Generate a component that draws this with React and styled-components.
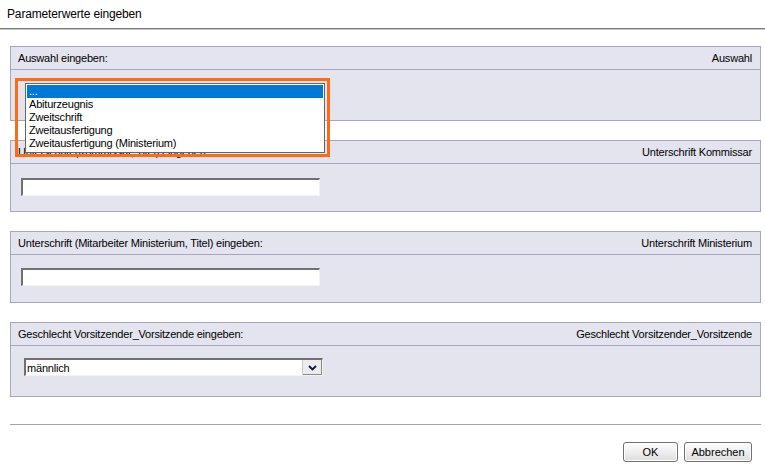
import React from 'react';
import styled, { createGlobalStyle } from 'styled-components';

const GlobalStyle = createGlobalStyle`
  html, body {
    margin: 0;
    padding: 0;
    background: #ffffff;
  }
  body {
    font-family: "Liberation Sans", Arial, sans-serif;
    font-size: 11px;
    letter-spacing: -0.2px;
    color: #000;
  }
`;

const Dialog = styled.div`
  width: 765px;
  height: 466px;
  display: flex;
  flex-direction: column;
  background: #ffffff;
`;

const TitleBar = styled.div`
  height: 28px;
  display: flex;
  align-items: center;
  padding-left: 7px;
  font-size: 12px;
  letter-spacing: -0.15px;
  border-bottom: 1px solid #7c7c7c;
  box-shadow: 0 1px 0 #c4c4c4;
`;

const Content = styled.div`
  display: flex;
  flex-direction: column;
  gap: 19px;
  padding: 17px 4px 0 10px;
`;

const Panel = styled.div`
  border: 1px solid #a7a6bd;
  background: #e4e4ee;
`;

const PanelHeader = styled.div`
  height: 22px;
  display: flex;
  align-items: center;
  justify-content: space-between;
  padding: 0 8px 0 7px;
  border-bottom: 1px solid #a7a6bd;
`;

const PanelBody = styled.div`
  position: relative;
  height: ${(p) => p.$height}px;
  display: flex;
  align-items: flex-start;
  padding-top: ${(p) => p.$top}px;
  padding-left: ${(p) => p.$left}px;
  box-sizing: border-box;
`;

const TextInput = styled.input`
  width: 299px;
  height: 18px;
  box-sizing: border-box;
  margin: 0;
  padding: 0 3px;
  background: #ffffff;
  border-style: solid;
  border-width: 2px 1px 1px 2px;
  border-color: #707070 #f2f2f2 #f2f2f2 #707070;
  font: inherit;
  outline: none;
`;

const SelectBox = styled.div`
  width: 299px;
  height: 18px;
  box-sizing: border-box;
  display: flex;
  background: #ffffff;
  border-style: solid;
  border-width: 2px 1px 1px 2px;
  border-color: #707070 #f2f2f2 #f2f2f2 #707070;
`;

const SelectValue = styled.div`
  flex: 1;
  display: flex;
  align-items: center;
  padding-left: 1px;
`;

const SelectArrow = styled.div`
  width: 19px;
  display: flex;
  align-items: center;
  justify-content: center;
  background: #ececec;
  border-left: 1px solid #c8c8c8;
  box-shadow: inset -1px -1px 0 #8a8a8a;
`;

const ListBox = styled.ul`
  position: absolute;
  top: 13px;
  left: 14px;
  width: 300px;
  margin: 0;
  padding: 1px 1px 2px;
  list-style: none;
  background: #ffffff;
  border: 1px solid #666666;
  box-sizing: border-box;
  z-index: 2;
`;

const ListItem = styled.li`
  height: 13px;
  line-height: 13px;
  padding-left: 2px;
  white-space: nowrap;
  background: ${(p) => (p.$selected ? '#0078d7' : 'transparent')};
  color: ${(p) => (p.$selected ? '#ffffff' : '#000000')};
`;

const Highlight = styled.div`
  position: absolute;
  top: 8px;
  left: 4px;
  width: 315px;
  height: 79px;
  box-sizing: border-box;
  border: 3px solid #ff6a14;
  pointer-events: none;
  z-index: 3;
`;

const Separator = styled.div`
  margin: 27px 4px 0 10px;
  height: 1px;
  background: #a4a4a4;
`;

const ButtonRow = styled.div`
  display: flex;
  justify-content: flex-end;
  gap: 6px;
  padding: 17px 13px 0 0;
`;

const Button = styled.button`
  width: ${(p) => p.$width}px;
  height: 20px;
  margin: 0;
  padding: 0;
  font: inherit;
  color: #000;
  border: 1px solid #707070;
  border-radius: 3px;
  background: linear-gradient(#fdfdfd, #ededed 55%, #dcdcdc);
  box-shadow: inset 0 0 0 1px #ffffff;
`;

const Chevron = () => (
  <svg width="9" height="6" viewBox="0 0 9 6">
    <polyline points="1,1 4.5,4.5 8,1" fill="none" stroke="#0c1840" strokeWidth="1.8" />
  </svg>
);

const options = [
  '...',
  'Abiturzeugnis',
  'Zweitschrift',
  'Zweitausfertigung',
  'Zweitausfertigung (Ministerium)',
];

const App = () => {
  return (
    <Dialog>
      <GlobalStyle />
      <TitleBar>Parameterwerte eingeben</TitleBar>
      <Content>
        <Panel>
          <PanelHeader>
            <span>Auswahl eingeben:</span>
            <span>Auswahl</span>
          </PanelHeader>
          <PanelBody $height={50} $top={13} $left={13}>
            <ListBox>
              {options.map((o, i) => (
                <ListItem key={o} $selected={i === 0}>{o}</ListItem>
              ))}
            </ListBox>
            <Highlight />
          </PanelBody>
        </Panel>

        <Panel>
          <PanelHeader>
            <span>Unterschrift (Kommissar, Titel) eingeben:</span>
            <span>Unterschrift Kommissar</span>
          </PanelHeader>
          <PanelBody $height={47} $top={14} $left={10}>
            <TextInput type="text" />
          </PanelBody>
        </Panel>

        <Panel>
          <PanelHeader>
            <span>Unterschrift (Mitarbeiter Ministerium, Titel) eingeben:</span>
            <span>Unterschrift Ministerium</span>
          </PanelHeader>
          <PanelBody $height={47} $top={13} $left={10}>
            <TextInput type="text" />
          </PanelBody>
        </Panel>

        <Panel>
          <PanelHeader>
            <span>Geschlecht Vorsitzender_Vorsitzende eingeben:</span>
            <span>Geschlecht Vorsitzender_Vorsitzende</span>
          </PanelHeader>
          <PanelBody $height={50} $top={12} $left={13}>
            <SelectBox>
              <SelectValue>männlich</SelectValue>
              <SelectArrow>
                <Chevron />
              </SelectArrow>
            </SelectBox>
          </PanelBody>
        </Panel>
      </Content>
      <Separator />
      <ButtonRow>
        <Button $width={55}>OK</Button>
        <Button $width={68}>Abbrechen</Button>
      </ButtonRow>
    </Dialog>
  );
};

export default App;
